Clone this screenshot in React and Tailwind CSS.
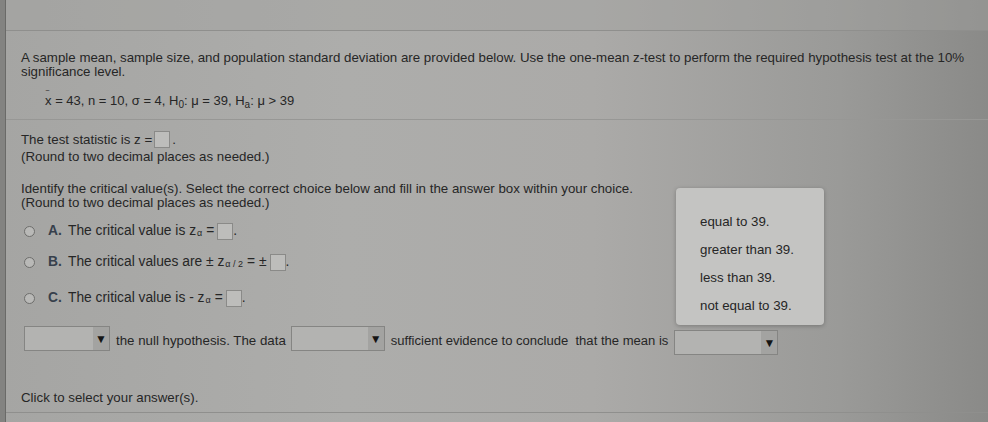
import React from "react";

const Box = ({ className = "" }) => (
  <span className={`inline-block w-[16px] h-[17px] border border-[#8a8a88] bg-[#bdbdbb] align-middle ${className}`} />
);

const Radio = () => (
  <span className="inline-block w-[11px] h-[11px] rounded-full border-[1.5px] border-[#6e6e6c] bg-[#b9b9b7] shrink-0" />
);

const Select = ({ w, className = "" }) => (
  <span className={`inline-flex h-[25px] border border-[#858583] bg-[#b3b3b1] shrink-0 ${className}`} style={{ width: w }}>
    <span className="flex-1" />
    <span className="w-[16px] flex items-center justify-center bg-[#a3a3a1] text-[12px] text-[#151515]">▼</span>
  </span>
);

export default function App() {
  return (
    <div
      className="relative w-[988px] h-[422px] overflow-hidden flex text-[#262626] bg-[linear-gradient(90deg,#a5a5a3_0%,#adadab_35%,#abaaa8_60%,#9a9a98_85%,#8a8a88_100%)]"
      style={{ fontFamily: '"Liberation Sans", Arial, sans-serif' }}
    >
      <div className="w-[6px] h-full bg-[#838381] border-r border-[#6a6a68] shrink-0" />
      <div className="flex-1 flex flex-col">
        <div className="h-[31px] border-b border-[#8f8f8d] bg-[#a2a2a0]/40 shrink-0" />
        <div className="pl-[15px] pr-2 pt-[20px] text-[13.3px] leading-[13.5px] whitespace-nowrap">
          <p>
            A sample mean, sample size, and population standard deviation are provided below. Use the one-mean z-test to perform the required hypothesis test at the 10%
          </p>
          <p>significance level.</p>
          <p className="pl-[24px] mt-[15px] text-[13px] leading-[16px] h-[16px]">
            <span className="relative">
              x<span className="absolute left-[1px] -top-[6px] text-[9px]">‾</span>
            </span>{" "}
            = 43, n = 10, σ = 4, H<sub className="text-[10px] leading-none">0</sub>: μ = 39, H<sub className="text-[10px] leading-none">a</sub>: μ &gt; 39
          </p>
        </div>
        <div className="mt-[10px] border-b border-[#979795]" />
        <div className="pl-[15px] pt-[10px] text-[13.3px] whitespace-nowrap">
          <p className="flex items-center gap-[2px] h-[19px]">
            The test statistic is z = <Box /> .
          </p>
          <p className="leading-[15px]">(Round to two decimal places as needed.)</p>
          <p className="mt-[18px] leading-[13.5px]">
            Identify the critical value(s). Select the correct choice below and fill in the answer box within your choice.
          </p>
          <p className="leading-[13.5px]">(Round to two decimal places as needed.)</p>
          <div className="flex flex-col pl-[3px] text-[13.8px]">
            <div className="flex items-center h-[18px] mt-[13px]">
              <Radio />
              <span className="ml-[13px] w-[20px] font-bold text-[#37404c]">A.</span>
              <span className="flex items-center">
                The critical value is z<sub className="text-[9px] ml-[1px] mr-[4px] leading-none">α</sub> = <Box className="ml-[3px]" /> .
              </span>
            </div>
            <div className="flex items-center h-[18px] mt-[13px]">
              <Radio />
              <span className="ml-[13px] w-[20px] font-bold text-[#37404c]">B.</span>
              <span className="flex items-center">
                The critical values are ± z<sub className="text-[9px] ml-[1px] mr-[4px] leading-none">α / 2</sub> = ± <Box className="ml-[3px]" /> .
              </span>
            </div>
            <div className="flex items-center h-[18px] mt-[18px]">
              <Radio />
              <span className="ml-[13px] w-[20px] font-bold text-[#37404c]">C.</span>
              <span className="flex items-center">
                The critical value is - z<sub className="text-[9px] ml-[1px] mr-[4px] leading-none">α</sub> = <Box className="ml-[3px]" /> .
              </span>
            </div>
          </div>
          <div className="mt-[19px] flex items-start pl-[3px]">
            <Select w={86} />
            <span className="ml-[6px] mt-[5px]">the null hypothesis. The data</span>
            <Select w={94} className="ml-[5px]" />
            <span className="ml-[6px] mt-[5px] text-[13.05px]">sufficient evidence to conclude&nbsp; that the mean is</span>
            <Select w={104} className="ml-[6px] mt-[4px] border-[#505050]" />
          </div>
          <p className="mt-[35px] leading-[16px]">Click to select your answer(s).</p>
        </div>
        <div className="mt-[6px] border-b border-[#8f8f8d]" />
      </div>

      <div className="absolute left-[676px] top-[188px] w-[148px] h-[137px] rounded-[4px] bg-[#c4c4c2] shadow-[0_1px_4px_rgba(0,0,0,0.25)] text-[13.3px] pl-[24px] pt-[26px] flex flex-col gap-[12px] leading-[16px] whitespace-nowrap">
        <span>equal to 39.</span>
        <span>greater than 39.</span>
        <span>less than 39.</span>
        <span>not equal to 39.</span>
      </div>
    </div>
  );
}
